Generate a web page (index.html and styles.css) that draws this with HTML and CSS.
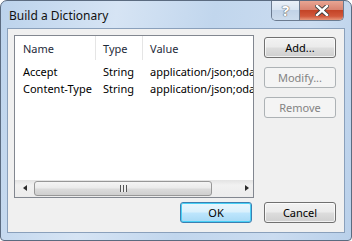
FILE: index.html
```html
<!DOCTYPE html>
<html lang="en">
<head>
    <meta charset="UTF-8">
    <title>Build a Dictionary</title>
    <link rel="stylesheet" href="styles.css">
</head>
<body>
    <div class="window">
        <div class="titlebar">
            <span class="title">Build a Dictionary</span>
            <div class="caption">
                <div class="cap help">?</div>
                <div class="cap close">
                    <svg width="14" height="11" viewBox="0 0 14 11">
                        <path d="M2 1 L12 10 M12 1 L2 10" stroke="#3b3b3b" stroke-width="4.2" stroke-linecap="square"/>
                        <path d="M2 1 L12 10 M12 1 L2 10" stroke="#ffffff" stroke-width="2.4" stroke-linecap="square"/>
                    </svg>
                </div>
            </div>
        </div>
        <div class="client">
            <div class="main">
                <div class="listview">
                    <div class="lv-header">
                        <div class="cell c-name">Name</div>
                        <div class="cell c-type">Type</div>
                        <div class="cell c-value">Value</div>
                    </div>
                    <div class="lv-body">
                        <div class="row">
                            <div class="cell c-name">Accept</div>
                            <div class="cell c-type">String</div>
                            <div class="cell c-value">application/json;odata=verbose</div>
                        </div>
                        <div class="row">
                            <div class="cell c-name">Content-Type</div>
                            <div class="cell c-type">String</div>
                            <div class="cell c-value">application/json;odata=verbose</div>
                        </div>
                    </div>
                    <div class="hscroll">
                        <div class="arrow left"></div>
                        <div class="track">
                            <div class="thumb"><span class="grip"></span></div>
                        </div>
                        <div class="arrow right"></div>
                    </div>
                </div>
                <div class="side">
                    <div class="btn">Add...</div>
                    <div class="btn disabled">Modify...</div>
                    <div class="btn disabled">Remove</div>
                </div>
            </div>
            <div class="footer">
                <div class="btn default">OK</div>
                <div class="btn">Cancel</div>
            </div>
        </div>
    </div>
</body>
</html>
```

FILE: styles.css
```css
* {
    box-sizing: border-box;
}
body {
    margin: 0;
    font-family: "Noto Sans", "Open Sans", sans-serif;
    font-size: 11px;
    color: #000;
    background: #fff;
}
.window {
    width: 352px;
    height: 241px;
    border: 1px solid #5b6b80;
    border-radius: 7px 7px 4px 4px;
    padding: 0 6px 7px;
    display: flex;
    flex-direction: column;
    background: linear-gradient(100deg, #bcd3ec 0%, #d6e4f4 30%, #c1d6ed 55%, #cbdcf0 80%, #b9d0ea 100%);
    overflow: hidden;
}
.titlebar {
    height: 28px;
    display: flex;
    align-items: flex-start;
    justify-content: space-between;
}
.title {
    margin: 6px 0 0 2px;
    font-size: 12px;
    color: #111;
}
/* 右上角的 ? 和 关闭 按钮 */
.caption {
    display: flex;
    margin-right: 1px;
    border: 1px solid #6b7b90;
    border-top: none;
    border-radius: 0 0 5px 5px;
    overflow: hidden;
    height: 20px;
}
.cap {
    display: flex;
    align-items: center;
    justify-content: center;
}
.help {
    width: 28px;
    background: linear-gradient(#e9f0f8 0%, #d9e5f2 45%, #c2d3e7 50%, #cddcec 100%);
    border-right: 1px solid #6b7b90;
    font-size: 15px;
    font-weight: 700;
    color: #fff;
    text-shadow: 0 0 1px #666, 0 0 1px #666, 0 0 1px #666;
    line-height: 1;
}
.close {
    width: 43px;
    background: linear-gradient(#e8a593 0%, #d98471 45%, #c44427 50%, #d1583b 80%, #e6967a 100%);
}
.client {
    flex: 1;
    border: 1px solid #8aa0bb;
    background: #f0f0f0;
    padding: 6px 8px 9px 6px;
    display: flex;
    flex-direction: column;
}
.main {
    display: flex;
    gap: 10px;
}
.listview {
    width: 240px;
    height: 163px;
    border: 1px solid #828790;
    background: #fff;
    display: flex;
    flex-direction: column;
    overflow: hidden;
    white-space: nowrap;
}
.lv-header {
    height: 24px;
    display: flex;
    align-items: center;
    flex-shrink: 0;
    color: #1e2a3a;
}
.lv-header .cell {
    height: 100%;
    display: flex;
    align-items: center;
}
.lv-header .c-type,
.lv-header .c-value {
    border-left: 1px solid #e5e5e5;
}
.cell {
    flex-shrink: 0;
    padding-left: 7px;
    overflow: hidden;
}
.c-name {
    width: 80px;
    padding-left: 8px;
}
.c-type {
    width: 47px;
}
.c-value {
    flex: 1;
    min-width: 0;
}
.lv-body {
    flex: 1;
    padding-top: 3px;
}
.row {
    display: flex;
    height: 17px;
    align-items: center;
}
.row .c-type,
.row .c-value {
    padding-left: 8px;
}
/* 水平滚动条 */
.hscroll {
    height: 17px;
    flex-shrink: 0;
    display: flex;
    background: linear-gradient(#e3e3e3, #f1f1f1 30%, #ececec);
}
.arrow {
    width: 17px;
    position: relative;
}
.arrow::after {
    content: "";
    position: absolute;
    top: 5px;
    border: 3.5px solid transparent;
}
.arrow.left::after {
    left: 5px;
    border-right: 4px solid #2b2b2b;
}
.arrow.right::after {
    left: 9px;
    border-left: 4px solid #2b2b2b;
}
.track {
    flex: 1;
    padding: 1px 2px;
}
.thumb {
    width: 178px;
    height: 100%;
    border: 1px solid #979797;
    border-radius: 3px;
    background: linear-gradient(#f4f4f4 0%, #ebebeb 45%, #dbdbdb 55%, #cfcfcf 100%);
    display: flex;
    align-items: center;
    justify-content: center;
}
.grip {
    width: 7px;
    height: 7px;
    background: repeating-linear-gradient(90deg, #555 0 1px, #eee 1px 3px);
}
.side {
    width: 72px;
    margin-top: 2px;
    display: flex;
    flex-direction: column;
    gap: 9px;
}
.btn {
    height: 21px;
    width: 72px;
    border: 1px solid #707070;
    border-radius: 3px;
    background: linear-gradient(#f2f2f2 0%, #ebebeb 48%, #dddddd 52%, #cfcfcf 100%);
    box-shadow: inset 0 0 0 1px rgba(255, 255, 255, .7);
    display: flex;
    align-items: center;
    justify-content: center;
    font-size: 11px;
}
.btn.disabled {
    border-color: #adb2b5;
    background: #f4f4f4;
    box-shadow: none;
    color: #838383;
}
.btn.default {
    border-color: #3c7fb1;
    background: linear-gradient(#eaf6fd 0%, #d9f0fc 48%, #bee6fd 52%, #a7d9f5 100%);
    box-shadow: inset 0 0 0 1px #48d0f6;
}
.footer {
    margin-top: 4px;
    display: flex;
    justify-content: flex-end;
    gap: 12px;
}
```
